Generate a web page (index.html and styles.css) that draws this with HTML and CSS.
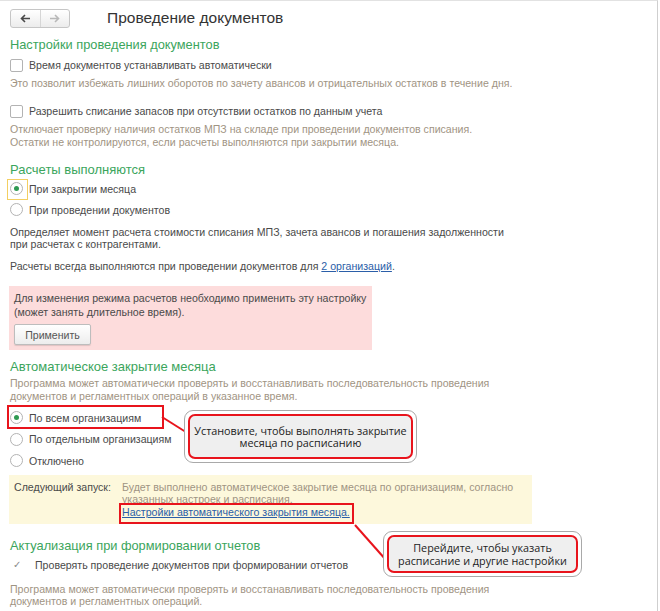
FILE: index.html
```html
<!DOCTYPE html>
<html lang="ru">

<head>
    <meta charset="UTF-8">
    <meta name="viewport" content="width=device-width, initial-scale=1.0">
    <title>Проведение документов</title>
    <link rel="stylesheet" href="styles.css">
</head>

<body>
    <div class="window">
        <div class="page">
            <div class="head">
                <div class="nav">
                    <span class="nav-btn">
                        <svg width="11" height="9" viewBox="0 0 11 9"><path d="M10 4.5H2M5 1L1.5 4.5 5 8" fill="none" stroke="#4a4a4a" stroke-width="1.6"/></svg>
                    </span>
                    <span class="nav-btn off">
                        <svg width="11" height="9" viewBox="0 0 11 9"><path d="M1 4.5h8M6 1l3.5 3.5L6 8" fill="none" stroke="#b8b8b8" stroke-width="1.6"/></svg>
                    </span>
                </div>
                <h1 class="title">Проведение документов</h1>
            </div>

            <h2 class="group-title g1">Настройки проведения документов</h2>
            <div class="option check o1"><span class="box"></span>Время документов устанавливать автоматически</div>
            <p class="note n1">Это позволит избежать лишних оборотов по зачету авансов и отрицательных остатков в течение дня.</p>
            <div class="option check o2"><span class="box"></span>Разрешить списание запасов при отсутствии остатков по данным учета</div>
            <p class="note n2">Отключает проверку наличия остатков МПЗ на складе при проведении документов списания.<br>Остатки не контролируются, если расчеты выполняются при закрытии месяца.</p>

            <h2 class="group-title g2">Расчеты выполняются</h2>
            <div class="option radio o3"><span class="dot on focus"></span>При закрытии месяца</div>
            <div class="option radio"><span class="dot"></span>При проведении документов</div>
            <p class="text t1">Определяет момент расчета стоимости списания МПЗ, зачета авансов и погашения задолженности<br>при расчетах с контрагентами.</p>
            <p class="text t2">Расчеты всегда выполняются при проведении документов для <a href="#" class="link">2 организаций</a>.</p>

            <div class="alert">
                <p>Для изменения режима расчетов необходимо применить эту настройку<br>(может занять длительное время).</p>
                <button class="btn">Применить</button>
            </div>

            <h2 class="group-title g3">Автоматическое закрытие месяца</h2>
            <p class="note n3">Программа может автоматически проверять и восстанавливать последовательность проведения<br>документов и регламентных операций в указанное время.</p>
            <div class="option radio o4"><span class="marked"><span class="dot on"></span>По всем организациям</span></div>
            <div class="option radio"><span class="dot"></span>По отдельным организациям</div>
            <div class="option radio"><span class="dot"></span>Отключено</div>

            <div class="schedule">
                <div class="schedule-label">Следующий запуск:</div>
                <div class="schedule-body">
                    <p>Будет выполнено автоматическое закрытие месяца по организациям, согласно<br>указанных настроек и расписания.</p>
                    <a href="#" class="link marked-link">Настройки автоматического закрытия месяца.</a>
                </div>
            </div>

            <h2 class="group-title g4">Актуализация при формировании отчетов</h2>
            <div class="option tick o5"><span class="tick-mark">&#10003;</span>Проверять проведение документов при формировании отчетов</div>
            <p class="note n4">Программа может автоматически проверять и восстанавливать последовательность проведения<br>документов и регламентных операций.</p>

            <svg class="leaders" width="660" height="611" viewBox="0 0 660 611">
                <path d="M162 417L189 434" stroke="#e8141c" stroke-width="2"/>
                <path d="M355 525L386 560" stroke="#e8141c" stroke-width="2"/>
            </svg>
            <div class="callout c1">
                <div class="callout-inner">
                    <span>Установите, чтобы выполнять закрытие</span>
                    <span>месяца по расписанию</span>
                </div>
            </div>
            <div class="callout c2">
                <div class="callout-inner">
                    <span>Перейдите, чтобы указать</span>
                    <span>расписание и другие настройки</span>
                </div>
            </div>
        </div>
    </div>
</body>

</html>
```

FILE: styles.css
```css
* {
    margin: 0;
    padding: 0;
    box-sizing: border-box;
}

body {
    background: #fff;
    font-family: "Liberation Sans", Arial, sans-serif;
    font-size: 10.6px;
    color: #4a4a4a;
}

.window {
    width: 658px;
    height: 611px;
    border-right: 1px solid #cfcfcf;
    border-top: 1px solid #e2e2e2;
    overflow: hidden;
}

.page {
    position: relative;
    padding-left: 10px;
    white-space: nowrap;
}

/* шапка */
.head {
    height: 33px;
    display: flex;
    align-items: center;
}

.nav {
    display: flex;
    width: 60px;
    height: 19px;
    border: 1px solid #c6c6c6;
    border-radius: 3px;
    background: linear-gradient(#fff, #ececec);
    margin-top: 1px;
}

.nav-btn {
    flex: 1;
    display: flex;
    align-items: center;
    justify-content: center;
}

.nav-btn + .nav-btn {
    border-left: 1px solid #d6d6d6;
}

.title {
    margin-left: 37px;
    font-size: 15.5px;
    font-weight: normal;
    color: #333;
}

/* заголовки групп */
.group-title {
    font-size: 13px;
    font-weight: normal;
    color: #3ba55c;
    line-height: 16px;
}

.g1 {
    margin-top: 2px;
    line-height: 18px;
    font-size: 12.8px;
}

.g2 {
    margin-top: 13px;
}

.g3 {
    margin-top: 9px;
}

.g4 {
    margin-top: 14px;
    font-size: 12.8px;
}

/* флажки и переключатели */
.option {
    display: flex;
    align-items: center;
    height: 18px;
    color: #4a4a4a;
}

.box {
    width: 13px;
    height: 13px;
    border: 1px solid #b3b3b3;
    border-radius: 2px;
    background: #fff;
    margin-right: 6px;
}

.o1 {
    margin-top: 2px;
}

.o2 {
    margin-top: 12px;
}

.radio {
    height: 21.5px;
}

.o3 {
    height: 21px;
}

.o3 + .radio {
    height: 21px;
}

.o4 {
    margin-top: 4px;
}

.dot {
    position: relative;
    width: 13px;
    height: 13px;
    border: 1px solid #b3b3b3;
    border-radius: 50%;
    background: #fff;
    margin-right: 6px;
    flex-shrink: 0;
}

.dot.on::after {
    content: "";
    position: absolute;
    left: 3px;
    top: 3px;
    width: 5px;
    height: 5px;
    border-radius: 50%;
    background: #2f9a52;
}

.dot.focus::before {
    content: "";
    position: absolute;
    left: -4px;
    top: -4px;
    width: 19px;
    height: 19px;
    border: 1px solid #f3cf62;
}

.marked {
    position: relative;
    display: flex;
    align-items: center;
}

.marked::after {
    content: "";
    position: absolute;
    left: -3px;
    right: -23px;
    top: -6px;
    bottom: -5px;
    border: 2px solid #e8141c;
}

.tick {
    margin-top: 2px;
}

.tick-mark {
    width: 25px;
    padding-left: 3px;
    color: #8a8a8a;
    font-size: 10px;
}

/* тексты */
.note {
    color: #9f9483;
    line-height: 13px;
}

.n1 {
    margin-top: 3px;
}

.n2 {
    margin-top: 3px;
}

.n3 {
    margin-top: 2px;
}

.n4 {
    margin-top: 9px;
    line-height: 12px;
}

.text {
    line-height: 12px;
}

.t1 {
    margin-top: 6px;
}

.t2 {
    margin-top: 10px;
}

.link {
    color: #2b5ea8;
    text-decoration: underline;
}

/* предупреждение */
.alert {
    width: 363px;
    height: 64px;
    margin-top: 14px;
    margin-left: -1px;
    padding: 5px 5px 0;
    background: #fddcdc;
    line-height: 14px;
}

.btn {
    display: block;
    width: 77px;
    height: 21px;
    margin-top: 5px;
    border: 1px solid #bdbdbd;
    border-radius: 2px;
    background: linear-gradient(#fff, #ededed);
    box-shadow: 0 1px 1px rgba(0, 0, 0, .12);
    font-family: inherit;
    font-size: 10.6px;
    color: #555;
}

/* следующий запуск */
.schedule {
    display: flex;
    width: 523px;
    height: 49px;
    margin-top: 3px;
    margin-left: -1px;
    padding: 6px 5px 0;
    background: #fdf8dc;
    line-height: 12px;
}

.schedule-label {
    width: 108px;
}

.schedule-body p {
    color: #9f9483;
}

.marked-link {
    position: relative;
    display: inline-block;
    margin-top: 1px;
}

.marked-link::after {
    content: "";
    position: absolute;
    left: -3px;
    right: -4px;
    top: -3px;
    bottom: -6px;
    border: 2px solid #e8141c;
}

/* выноски */
.leaders {
    position: absolute;
    left: 0;
    top: -1px;
    pointer-events: none;
}

.callout {
    position: absolute;
    padding: 3px;
    border: 1px solid #a9a9a9;
    border-radius: 9px;
    background: #fff;
}

.callout-inner {
    display: flex;
    flex-direction: column;
    align-items: center;
    justify-content: center;
    gap: 0;
    height: 100%;
    border: 2px solid #e8141c;
    border-radius: 7px;
    background: #efefef;
    font-family: "Open Sans", "Noto Sans", sans-serif;
    font-size: 10.8px;
    color: #222;
    text-align: center;
}

.callout-inner span {
    display: block;
    height: 12px;
    line-height: 12px;
}

.c1 {
    left: 184px;
    top: 409px;
    width: 233px;
    height: 53px;
}

.c2 {
    left: 383px;
    top: 530px;
    width: 199px;
    height: 46px;
}

.c2 .callout-inner span {
    height: 13px;
    line-height: 13px;
}
```
